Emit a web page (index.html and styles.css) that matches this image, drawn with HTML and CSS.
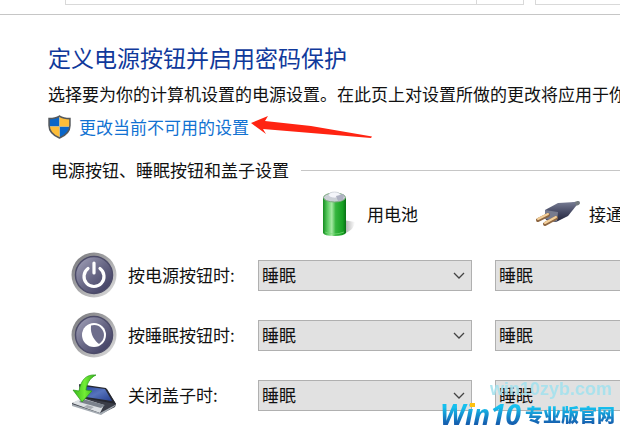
FILE: index.html
```html
<!DOCTYPE html>
<html lang="zh-CN">
<head>
<meta charset="utf-8">
<title>电源选项</title>
<link rel="stylesheet" href="styles.css">
</head>
<body>
<header class="toolbar">
  <div class="address"><span class="address-end"></span></div>
  <div class="search"></div>
</header>
<main class="content">
  <h1 class="title">定义电源按钮并启用密码保护</h1>
  <p class="intro">选择要为你的计算机设置的电源设置。在此页上对设置所做的更改将应用于你的所有电源计划。</p>
  <div class="unlock">
    <svg class="shield" viewBox="0 0 22 23" aria-hidden="true">
      <defs><clipPath id="shield-shape"><path d="M11 1C8 3 4 3.500 1 3.500V10c0 6 4 9.500 10 12 6-2.500 10-6 10-12V3.500C18 3.500 14 3 11 1Z"/></clipPath></defs>
      <g clip-path="url(#shield-shape)"><path fill="#0a66c8" d="M0 0h11v11H0zM11 11h11v12H11z"/><path fill="#fdbd39" d="M11 0h11v11H11zM0 11h11v12H0z"/></g>
      <path fill="none" stroke="#56595c" stroke-width="1.500" d="M11 1C8 3 4 3.500 1 3.500V10c0 6 4 9.500 10 12 6-2.500 10-6 10-12V3.500C18 3.500 14 3 11 1Z"/>
    </svg>
    <a class="link" href="#settings">更改当前不可用的设置</a>
    <svg class="arrow" viewBox="0 0 122 24" aria-hidden="true"><path fill="#ff2412" d="M0 8 17 1 14 6 60 11 121 21.500 120 23 60 18 12 14 15 19Z"/></svg>
  </div>
  <section id="settings">
    <h2 class="legend">电源按钮、睡眠按钮和盖子设置</h2>
    <div class="grid">
      <div class="source source-battery">
        <svg class="battery" viewBox="0 0 34 46" aria-hidden="true">
          <defs>
            <linearGradient id="cell"><stop offset="0" stop-color="#158c20"/><stop offset=".18" stop-color="#55c85b"/><stop offset=".38" stop-color="#a5e9a3"/><stop offset=".55" stop-color="#35b53e"/><stop offset=".85" stop-color="#17a023"/><stop offset="1" stop-color="#087015"/></linearGradient>
            <linearGradient id="cast"><stop offset="0" stop-color="#777"/><stop offset="1" stop-color="#fff"/></linearGradient>
          </defs>
          <path fill="url(#cast)" opacity=".7" d="M21 29 33 31Q33 38 22 43Z"/>
          <path fill="url(#cell)" d="M1 7Q12 1 24 7V42Q22 45 12 45T1 42Z"/>
          <ellipse cx="12.500" cy="6.500" rx="11" ry="4.500" fill="#cbd0d6" stroke="#7ba77e"/>
          <ellipse cx="12.500" cy="4" rx="6" ry="3" fill="#f4f5fa" stroke="#c8cbd6" stroke-width=".7"/>
          <path d="m14 5 8-2-1 6-5 1Z" fill="#aeb1c2"/>
          <path d="M3 41q9 4 19 0" fill="none" stroke="#78dc76" opacity=".7"/>
        </svg>
        <span>用电池</span>
      </div>
      <div class="source source-plug">
        <svg class="plug" viewBox="0 0 46 28" aria-hidden="true">
          <defs><linearGradient id="plug-body" x1="0" y1="0" x2="0" y2="1"><stop offset="0" stop-color="#777c93"/><stop offset=".5" stop-color="#464a64"/><stop offset="1" stop-color="#202238"/></linearGradient></defs>
          <path d="m37 5 6-2" stroke="#737a7e" stroke-width="4" stroke-linecap="round"/>
          <path fill="url(#plug-body)" d="m10 10 13-7 17-1 1 4-8 10-12 6-10-2Z"/>
          <path fill="#777b8e" d="m10 10 13 2-1 10-12-3Z"/>
          <path d="m3 20 10-5M10 24l11-6" stroke="#8e6742" stroke-width="4" stroke-linecap="round"/>
          <path d="m3 19 10-5M10 23l11-6" stroke="#f4cf99" stroke-width="2" stroke-linecap="round"/>
        </svg>
        <span>接通电源</span>
      </div>

      <div class="action">
        <svg class="icon" viewBox="0 0 46 46" aria-hidden="true">
          <defs>
            <linearGradient id="rim" x1="0" y1="0" x2="1" y2="1"><stop offset="0" stop-color="#77777b"/><stop offset=".5" stop-color="#a7a7a9"/><stop offset="1" stop-color="#e2e2e2"/></linearGradient>
            <linearGradient id="face" x1="0" y1="0" x2="1" y2="1"><stop offset="0" stop-color="#a7a7bd"/><stop offset=".5" stop-color="#686785"/><stop offset="1" stop-color="#38375b"/></linearGradient>
          </defs>
          <circle cx="23" cy="23" r="22.500" fill="url(#rim)"/><circle cx="23" cy="23" r="18.500" fill="url(#face)" stroke="#4d4c69" stroke-width="1.500"/>
          <path d="M17 16.500a10 10 0 1 0 12 0M23 11v10" fill="none" stroke="#fff" stroke-width="3.200" stroke-linecap="round"/>
        </svg>
        <span>按电源按钮时:</span>
      </div>
      <div class="picker"><select aria-label="按电源按钮时，用电池"><option>睡眠</option></select><svg viewBox="0 0 12 7" aria-hidden="true"><path d="m1 1 5 5 5-5"/></svg></div>
      <div class="picker"><select aria-label="按电源按钮时，接通电源"><option>睡眠</option></select><svg viewBox="0 0 12 7" aria-hidden="true"><path d="m1 1 5 5 5-5"/></svg></div>

      <div class="action">
        <svg class="icon" viewBox="0 0 46 46" aria-hidden="true">
          <circle cx="23" cy="23" r="22.500" fill="url(#rim)"/><circle cx="23" cy="23" r="18.500" fill="url(#face)" stroke="#4d4c69" stroke-width="1.500"/>
          <circle cx="23" cy="23" r="12" fill="#fff"/>
          <path d="M20 13.500C27 11 33 17 33 23c0 4-2 7-5 9-4-3-9-9-8-18.500Z" fill="#6d6d8b"/>
        </svg>
        <span>按睡眠按钮时:</span>
      </div>
      <div class="picker"><select aria-label="按睡眠按钮时，用电池"><option>睡眠</option></select><svg viewBox="0 0 12 7" aria-hidden="true"><path d="m1 1 5 5 5-5"/></svg></div>
      <div class="picker"><select aria-label="按睡眠按钮时，接通电源"><option>睡眠</option></select><svg viewBox="0 0 12 7" aria-hidden="true"><path d="m1 1 5 5 5-5"/></svg></div>

      <div class="action">
        <svg class="icon" viewBox="0 0 46 46" aria-hidden="true">
          <defs>
            <linearGradient id="screen" x1="0" y1="0" x2="1" y2="1"><stop offset="0" stop-color="#223f96"/><stop offset=".5" stop-color="#5673bd"/><stop offset="1" stop-color="#263f8d"/></linearGradient>
            <linearGradient id="green"><stop offset="0" stop-color="#37b51c"/><stop offset=".5" stop-color="#72ed35"/><stop offset="1" stop-color="#35ad1a"/></linearGradient>
          </defs>
          <path fill="#3a3d47" d="m8 13 28 4 9 15-1 3-14 7L1 33v-2l9-3Z"/>
          <path fill="#dce0e3" d="m1 31 10-5 22 7-4 8Z"/>
          <path fill="#7b828c" d="m12 27 22 6-4 3-22-6Z"/>
          <path fill="#a8adb3" d="m16 33 7 2-3 2-7-2Z"/>
          <path fill="#25272f" d="m8 12 27 4 10 16-32-6Z"/>
          <path fill="url(#screen)" d="m11 14 23 3 7 12-26-4Z"/>
          <path fill="#a4abb2" d="m1 32 28 9 15-8v1l-14 9-29-9Z"/>
          <path fill="url(#green)" stroke="#279b18" stroke-width=".7" d="M25 3C15 2 10 8 8 19l-6-1 9 12 10-11-6-1C16 11 19 6 25 3Z"/>
        </svg>
        <span>关闭盖子时:</span>
      </div>
      <div class="picker"><select aria-label="关闭盖子时，用电池"><option>睡眠</option></select><svg viewBox="0 0 12 7" aria-hidden="true"><path d="m1 1 5 5 5-5"/></svg></div>
      <div class="picker"><select aria-label="关闭盖子时，接通电源"><option>睡眠</option></select><svg viewBox="0 0 12 7" aria-hidden="true"><path d="m1 1 5 5 5-5"/></svg></div>
    </div>
  </section>
</main>
<div class="site-url">win10zyb.com</div>
<div class="brand"><span class="brand-latin">Win10</span><span class="brand-name">专业版官网</span><i class="brand-dot"></i></div>
</body>
</html>
```
FILE: styles.css
```css
* { box-sizing: border-box; }
body {
  margin: 0;
  min-height: 100vh;
  position: relative;
  overflow: hidden;
  background: #fff;
  color: #111;
  font: 17px/24px "Noto Sans CJK SC", sans-serif;
}
svg { display: block; flex: none; }
.toolbar {
  display: flex;
  gap: 11px;
  height: 15px;
  padding: 0 0 9px 65px;
  border-bottom: 1px solid #c6c6c6;
}
.address, .search { border: 1px solid #d9d9d9; border-top: 0; }
.address { flex: 1; display: flex; justify-content: flex-end; }
.address-end { width: 47px; border-left: 1px solid #d9d9d9; }
.search { width: 85px; border-right: 0; }
.content { padding: 26px 0 0 48px; overflow: hidden; }
.title { margin: 0; color: #10399b; font-size: 23px; font-weight: 400; line-height: 32px; white-space: nowrap; }
.intro { margin: 9px 0 8px; white-space: nowrap; }
.unlock { display: flex; align-items: center; height: 26px; }
.shield { width: 23px; height: 24px; margin-right: 8px; }
.link { color: #1272d2; text-decoration: none; }
.arrow { width: 122px; height: 24px; margin-left: 2px; }
.legend {
  display: flex;
  align-items: center;
  gap: 12px;
  margin: 18px 0 0;
  padding-left: 3px;
  font-size: 17px;
  font-weight: 400;
  white-space: nowrap;
}
.legend::after { content: ""; flex: 1; border-top: 1px solid #c6c6c6; }
.grid {
  display: grid;
  grid-template-columns: 187px 214px 214px;
  grid-template-rows: 63px repeat(3, 60px);
  column-gap: 23px;
  align-items: center;
}
.source { display: flex; align-items: center; white-space: nowrap; }
.source-battery { grid-column: 2; padding-left: 64px; gap: 11px; }
.source-plug { padding-left: 40px; gap: 8px; }
.battery { width: 34px; height: 46px; }
.plug { width: 46px; height: 28px; }
.action { display: flex; align-items: center; gap: 11px; padding-left: 23px; white-space: nowrap; }
.icon { width: 46px; height: 46px; }
.picker { display: grid; align-items: center; }
.picker select, .picker svg { grid-area: 1 / 1; }
.picker select {
  appearance: none;
  width: 100%;
  height: 31px;
  padding: 0 3px;
  border: 1px solid #b0b0b0;
  border-radius: 0;
  background: #e1e1e1;
  color: #111;
  font: inherit;
}
.picker svg {
  width: 12px;
  height: 7px;
  margin-right: 7px;
  justify-self: end;
  pointer-events: none;
  fill: none;
  stroke: #444;
  stroke-width: 1.3;
}
.site-url {
  position: absolute;
  right: 8px;
  bottom: 28px;
  color: #a5e2ee;
  opacity: .9;
  font: bold 18px/24px "Liberation Sans", sans-serif;
}
.brand {
  position: absolute;
  right: 5px;
  bottom: 0;
  display: flex;
  align-items: center;
  height: 29px;
  white-space: nowrap;
}
.brand-latin, .brand-name {
  background: linear-gradient(#16c0ee 25%, #1560b0 80%);
  background-clip: text;
  -webkit-background-clip: text;
  color: transparent;
}
.brand-latin { padding: 0 4px; font: italic bold 28px/29px "Open Sans", sans-serif; }
.brand-name { font-size: 18px; font-weight: 900; line-height: 29px; }
.brand-dot {
  position: absolute;
  left: 34px;
  top: 3px;
  width: 5px;
  height: 4px;
  background: #ffc20e;
}
```
